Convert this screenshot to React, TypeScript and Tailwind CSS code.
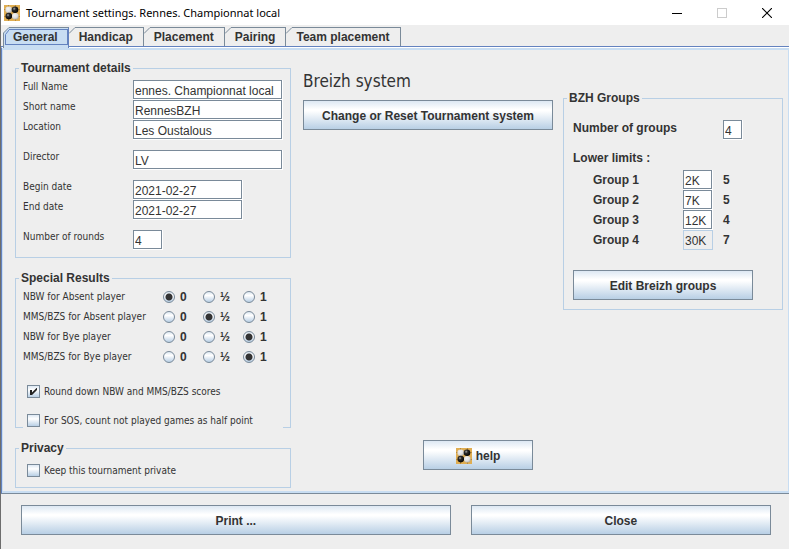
import React, { useId } from 'react';
import clsx from 'clsx';

const LABEL_FONT = "font-['DejaVu_Sans_Condensed','DejaVu_Sans',sans-serif]";

function StonesIcon() {
  return (
    <svg width="16" height="16" viewBox="0 0 16 16" aria-hidden="true" className="shrink-0">
      <defs>
        <radialGradient id="stone-white" cx="0.4" cy="0.35" r="0.7">
          <stop offset="0" stopColor="#f4f4f4" />
          <stop offset="0.6" stopColor="#dedede" />
          <stop offset="1" stopColor="#a8a8a8" />
        </radialGradient>
        <radialGradient id="stone-black" cx="0.38" cy="0.35" r="0.7">
          <stop offset="0" stopColor="#a8a8a8" />
          <stop offset="0.35" stopColor="#2a2a2a" />
          <stop offset="1" stopColor="#000000" />
        </radialGradient>
      </defs>
      <rect width="16" height="16" fill="#e0ae52" />
      <path d="M4.5 0V16M11.5 0V16M0 4.5H16M0 11.5H16" stroke="#b98a3a" strokeWidth="1" />
      <circle cx="4.7" cy="4.8" r="3.3" fill="url(#stone-white)" />
      <circle cx="11" cy="4.7" r="3.3" fill="url(#stone-black)" />
      <circle cx="4.8" cy="11.1" r="3.3" fill="url(#stone-black)" />
      <circle cx="11.3" cy="11.2" r="3.3" fill="url(#stone-white)" />
    </svg>
  );
}

function TitleBar() {
  return (
    <header className="flex h-[25px] items-center bg-white pl-[3px]">
      <StonesIcon />
      <h1 className="ml-[6px] flex-1 font-['Noto_Sans','Open_Sans',sans-serif] text-[11px] leading-4 text-black">
        Tournament settings. Rennes. Championnat local
      </h1>
      <button aria-label="Minimize" className="flex h-6 w-[45px] items-center justify-center">
        <svg width="10" height="10"><path d="M0 5.5H10" stroke="#000" /></svg>
      </button>
      <button aria-label="Maximize" disabled className="flex h-6 w-[45px] items-center justify-center">
        <svg width="10" height="10"><rect x="0.5" y="0.5" width="9" height="9" fill="none" stroke="#ccc" /></svg>
      </button>
      <button aria-label="Close window" className="flex h-6 w-[45px] items-center justify-center">
        <svg width="10" height="10"><path d="M0 0L10 10M10 0L0 10" stroke="#000" strokeWidth="1.1" /></svg>
      </button>
    </header>
  );
}

function Tab({ children, selected = false }: { children: string; selected?: boolean }) {
  return (
    <button
      role="tab"
      aria-selected={selected}
      className={clsx('flex items-start leading-4', selected ? 'relative -mb-[2px] h-[21px]' : 'h-[19px]')}
    >
      <svg width="6" height="21" aria-hidden="true" className="shrink-0">
        {selected && <path d="M0 21V6L6 0V21Z" fill="#c8ddf2" />}
        {selected && <path d="M2.5 17.5V7.5L6 3M2 17.5H6" stroke="#6382bf" fill="none" />}
        <path d={selected ? 'M0.5 21V6L6 0.5' : 'M0 6.5L6 0.5'} stroke="#7a8a99" fill="none" />
      </svg>
      <span
        className={clsx(
          'flex h-full border-t border-r border-t-[#7a8a99] pt-px',
          selected ? 'border-r-[#6382bf] bg-[#c8ddf2]' : 'border-r-[#7a8a99] pr-[10px] pl-1',
        )}
      >
        {selected ? (
          <span className="h-4 border-y border-r border-[#6382bf] pr-[9px] pl-1 leading-[14px]">{children}</span>
        ) : (
          children
        )}
      </span>
    </button>
  );
}

function Group({ title, className, children }: { title: string; className?: string; children: React.ReactNode }) {
  return (
    <fieldset className="min-w-0 border border-[#b8cfe5]">
      <legend className="ml-[3px] px-[2px] font-bold leading-[15px]">{title}</legend>
      <div className={className}>{children}</div>
    </fieldset>
  );
}

function TextBox({ id, value, width, disabled, label }: { id?: string; value: string; width: string; disabled?: boolean; label?: string }) {
  return (
    <span className={clsx('block h-5', width, !disabled && 'border-r border-b border-white')}>
      <input
        id={id}
        aria-label={label}
        defaultValue={value}
        disabled={disabled}
        className={clsx(
          'block h-full w-full border pt-[2px] pl-px text-xs leading-[15px] outline-none',
          disabled ? 'border-[#b8cfe5] bg-[#eeeeee]' : 'border-[#7a8a99] bg-white',
        )}
      />
    </span>
  );
}

function Field({ label, value, width, className }: { label: string; value: string; width: string; className?: string }) {
  const id = useId();
  return (
    <div className={clsx('flex h-5', className)}>
      <label htmlFor={id} className={clsx('w-[110px] text-[10px] leading-[14px]', LABEL_FONT)}>{label}</label>
      <TextBox id={id} value={value} width={width} />
    </div>
  );
}

const SCORES = ['0', '½', '1'];

function ScoreRow({ label, selected }: { label: string; selected: string }) {
  const name = useId();
  return (
    <div role="radiogroup" aria-label={label} className="flex h-5 items-center">
      <span className={clsx('w-[140px] text-[10px] leading-[14px]', LABEL_FONT)}>{label}</span>
      {SCORES.map((score) => (
        <label key={score} className="flex w-10 items-center gap-[5px] font-bold">
          <input
            type="radio"
            name={name}
            defaultChecked={score === selected}
            className="size-3 appearance-none rounded-full border border-[#7a8a99] bg-[linear-gradient(#dde8f3,#ffffff_35%,#b8cfe5)] checked:bg-[radial-gradient(circle,#333333_3px,transparent_4px),linear-gradient(#dde8f3,#ffffff_35%,#b8cfe5)]"
          />
          {score}
        </label>
      ))}
    </div>
  );
}

function CheckRow({ label, checked = false, className }: { label: string; checked?: boolean; className?: string }) {
  return (
    <label className={clsx('flex items-center gap-1 text-[10px] leading-[15px]', LABEL_FONT, className)}>
      <span className="grid size-[13px]">
        <input
          type="checkbox"
          defaultChecked={checked}
          className="peer col-start-1 row-start-1 size-[13px] appearance-none border border-[#7a8a99] bg-[linear-gradient(#dde8f3,#ffffff_35%,#b8cfe5)]"
        />
        <svg viewBox="0 0 13 13" aria-hidden="true" className="pointer-events-none invisible col-start-1 row-start-1 size-[13px] peer-checked:visible">
          <path d="M3 5H5V7.5L9.5 3H10V5L5 10H3Z" fill="#222" />
        </svg>
      </span>
      {label}
    </label>
  );
}

function PushButton({ children, className }: { children: React.ReactNode; className?: string }) {
  return (
    <button
      className={clsx(
        'flex h-[30px] items-center justify-center gap-1 border border-[#7a8a99] bg-[linear-gradient(#dde8f3,#ffffff_30%,#ffffff_35%,#b8cfe5)] pt-px font-bold',
        className,
      )}
    >
      {children}
    </button>
  );
}

const GROUPS = [
  { name: 'Group 1', limit: '2K', players: 5 },
  { name: 'Group 2', limit: '7K', players: 5 },
  { name: 'Group 3', limit: '12K', players: 4 },
  { name: 'Group 4', limit: '30K', players: 7 },
];

function GeneralPanel() {
  return (
    <main className="flex items-start border-t border-b border-l border-t-white border-b-[#7a8a99] border-l-[#6382bf]">
      <div className="flex flex-1 items-start border-x border-y-2 border-[#c8ddf2] pr-[5px] pb-[3px] pl-3">
        <div className="flex w-[276px] shrink-0 flex-col pt-[11px]">
          <Group title="Tournament details" className="px-[7px] pt-1 pb-[7px]">
            <Field label="Full Name" value="ennes. Championnat local" width="w-[150px]" />
            <Field label="Short name" value="RennesBZH" width="w-[150px]" />
            <Field label="Location" value="Les Oustalous" width="w-[150px]" />
            <Field label="Director" value="LV" width="w-[150px]" className="mt-[10px]" />
            <Field label="Begin date" value="2021-02-27" width="w-[110px]" className="mt-[10px]" />
            <Field label="End date" value="2021-02-27" width="w-[110px]" />
            <Field label="Number of rounds" value="4" width="w-[30px]" className="mt-[10px]" />
          </Group>
          <div className="mt-[13px]">
            <Group title="Special Results" className="px-[7px] pt-px">
              <ScoreRow label="NBW for Absent player" selected="0" />
              <ScoreRow label="MMS/BZS for Absent player" selected="½" />
              <ScoreRow label="NBW for Bye player" selected="1" />
              <ScoreRow label="MMS/BZS for Bye player" selected="1" />
              <CheckRow label="Round down NBW and MMS/BZS scores" checked className="mt-[17px] pl-1" />
              <CheckRow label="For SOS, count not played games as half point" className="mt-[14px] -mb-px bg-[#eeeeee] pl-1" />
            </Group>
          </div>
          <div className="mt-[13px]">
            <Group title="Privacy" className="px-[7px] pt-[7px] pb-[9px]">
              <CheckRow label="Keep this tournament private" className="pl-1" />
            </Group>
          </div>
        </div>
        <div className="ml-3 flex min-w-0 flex-1 flex-col pt-5">
          <h2 className={clsx('text-[17px] leading-[22px]', LABEL_FONT)}>Breizh system</h2>
          <PushButton className="mt-2">Change or Reset Tournament system</PushButton>
          <PushButton className="mt-[310px] mr-5 w-[110px] self-end">
            <StonesIcon />
            help
          </PushButton>
        </div>
        <div className="ml-[10px] w-[220px] shrink-0 pt-[41px]">
          <Group title="BZH Groups" className="px-[9px] pt-[14px] pb-[9px]">
            <div className="flex h-5">
              <label htmlFor="group-count" className="w-[150px] font-bold leading-4">Number of groups</label>
              <TextBox id="group-count" value="4" width="w-5" />
            </div>
            <p className="mt-[10px] h-5 font-bold leading-4">Lower limits :</p>
            {GROUPS.map((group) => (
              <div key={group.name} className="flex h-5 items-center pl-5 font-bold">
                <span className="w-[90px]">{group.name}</span>
                <span className="font-normal">
                  <TextBox label={`${group.name} lower limit`} value={group.limit} width="w-[30px]" disabled={group.limit === '30K'} />
                </span>
                <span className="ml-[10px]">{group.players}</span>
              </div>
            ))}
            <PushButton className="mt-5 w-[180px]">Edit Breizh groups</PushButton>
          </Group>
        </div>
      </div>
    </main>
  );
}

export default function App() {
  return (
    <div className="min-h-screen border-l border-[#6d6d6d] bg-[#eeeeee] font-['Liberation_Sans',Arial,sans-serif] text-xs leading-4 text-[#333333]">
      <TitleBar />
      <nav role="tablist" className="flex border-b border-[#6382bf] pt-[2px] pl-[2px] font-bold">
        <Tab selected>General</Tab>
        <Tab>Handicap</Tab>
        <Tab>Placement</Tab>
        <Tab>Pairing</Tab>
        <Tab>Team placement</Tab>
      </nav>
      <GeneralPanel />
      <footer className="flex gap-5 pt-[11px] pr-[18px] pb-[14px] pl-5">
        <PushButton className="flex-[43]">Print ...</PushButton>
        <PushButton className="flex-[30]">Close</PushButton>
      </footer>
    </div>
  );
}
